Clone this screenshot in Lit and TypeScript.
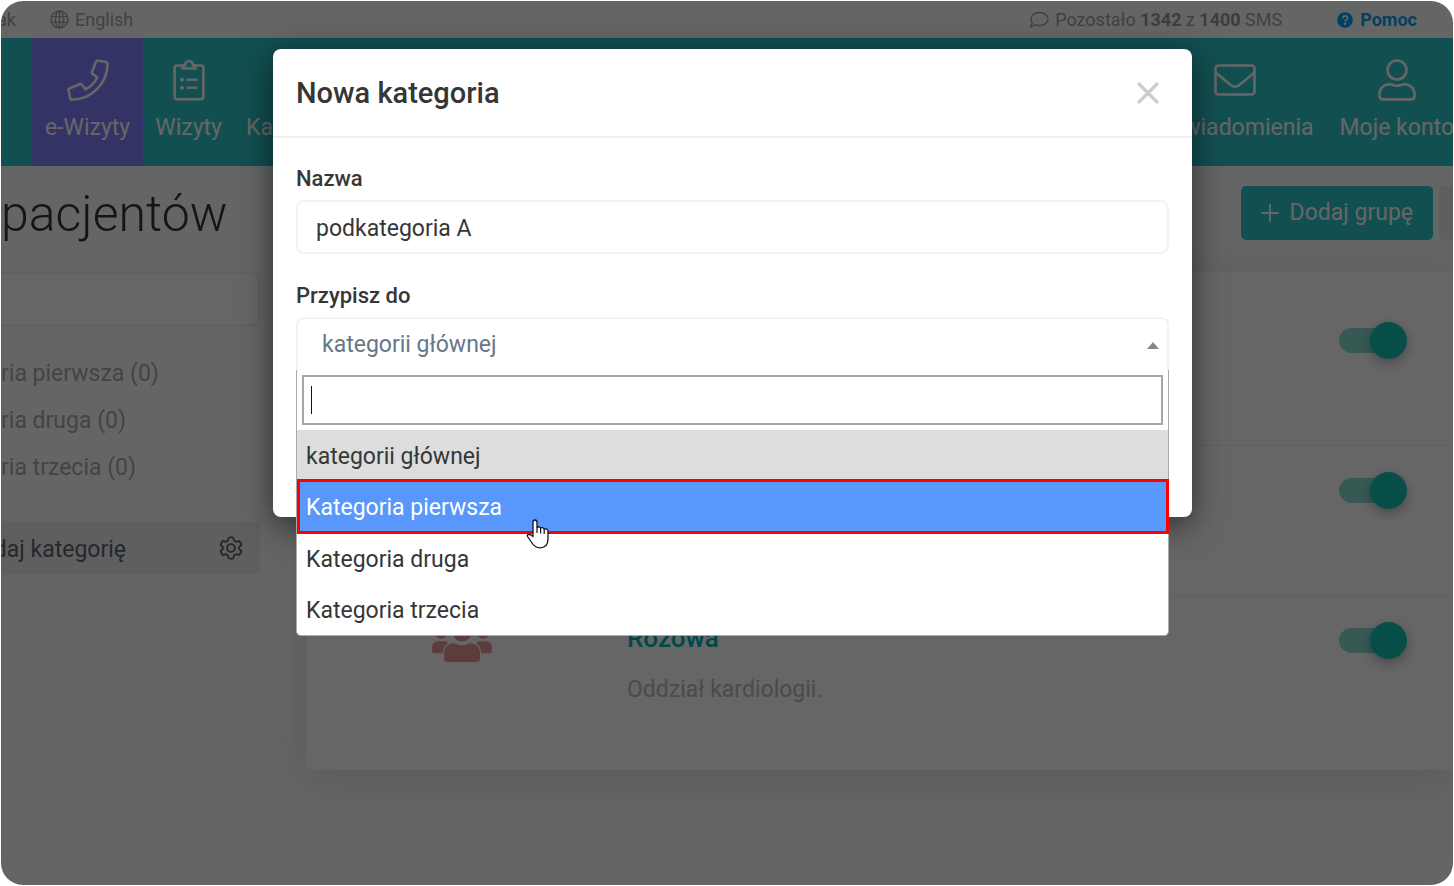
import { LitElement, html, svg, css } from "lit";
import { customElement, state } from "lit/decorators.js";
import { classMap } from "lit/directives/class-map.js";

interface Group {
  id: string;
  name: string;
  note: string;
}

const phoneIcon = svg`<svg class="nav-icon" viewBox="0 0 42 42" width="42" height="42" fill="none" stroke="currentColor" stroke-width="2.6" stroke-linejoin="round" aria-hidden="true"><path d="M30.5 1.5L39.5 3.2Q40.6 3.4 40.6 4.5C40.6 24.5 24.5 40.6 4.5 40.6Q3.4 40.6 3.2 39.5L1.5 31Q1.3 30 2.3 29.5L13 25Q14 24.6 14.7 25.5L18.5 30.3C23.5 27.8 27.8 23.5 30.3 18.5L25.5 14.7Q24.6 14 25 13L29.3 2.3Q29.7 1.4 30.5 1.5Z"/></svg>`;

const clipboardIcon = svg`<svg class="nav-icon" viewBox="0 0 32 42" width="32" height="42" fill="none" stroke="currentColor" stroke-width="2.6" stroke-linecap="round" stroke-linejoin="round" aria-hidden="true"><path d="M10 6.5H4.3Q1.6 6.5 1.6 9.2V37.5Q1.6 40.2 4.3 40.2H27.7Q30.4 40.2 30.4 37.5V9.2Q30.4 6.5 27.7 6.5H22"/><path d="M9.5 6.5H12.4A3.7 3.7 0 1 1 19.6 6.5H22.5V9.5H9.5Z"/><path d="M14.5 20.7H23.5M14.5 28.7H23.5"/><circle cx="9" cy="20.7" r="2" fill="currentColor" stroke="none"/><circle cx="9" cy="28.7" r="2" fill="currentColor" stroke="none"/></svg>`;

const envelopeIcon = svg`<svg class="nav-icon" viewBox="0 0 42 42" width="42" height="42" fill="none" stroke="currentColor" stroke-width="2.6" stroke-linejoin="round" aria-hidden="true"><rect x="1.5" y="6.5" width="39" height="29" rx="3"/><path d="M1.5 13.5L17 26.2Q21 29.2 25 26.2L40.5 13.5"/></svg>`;

const userIcon = svg`<svg class="nav-icon" viewBox="0 0 38 42" width="38" height="42" fill="none" stroke="currentColor" stroke-width="2.6" stroke-linejoin="round" aria-hidden="true"><circle cx="19" cy="11" r="9.5"/><path d="M11.5 25.2C15 25.2 15.5 26.8 19 26.8S23 25.2 26.5 25.2C32 25.2 36.5 29.5 36.5 35V37Q36.5 40.4 33 40.4H5Q1.5 40.4 1.5 37V35C1.5 29.5 6 25.2 11.5 25.2Z"/></svg>`;

const globeIcon = svg`<svg viewBox="0 0 20 20" width="19" height="19" fill="none" stroke="currentColor" stroke-width="1.5" aria-hidden="true"><circle cx="10" cy="10" r="9"/><ellipse cx="10" cy="10" rx="4.3" ry="9"/><path d="M10 1V19M1.8 7H18.2M1.8 13H18.2"/></svg>`;

const bubbleIcon = svg`<svg viewBox="0 0 20 18" width="20" height="18" fill="none" stroke="currentColor" stroke-width="1.4" stroke-linejoin="round" aria-hidden="true"><path d="M10.5 1.5C15.5 1.5 19 4.3 19 8S15.5 14.5 10.5 14.5C8.800 14.500 7.300 14.200 6 13.600C4.700 14.900 3 16 1 16C2.200 14.900 3 13.300 3.200 11.800C2.400 10.700 2 9.400 2 8C2 4.300 5.500 1.500 10.500 1.500Z"/></svg>`;

const helpIcon = svg`<svg viewBox="0 0 16 16" width="16" height="16" aria-hidden="true"><circle cx="8" cy="8" r="7.8" fill="currentColor"/><path d="M5.6 6.3C5.7 4.7 6.7 3.9 8.1 3.9C9.5 3.9 10.5 4.8 10.5 6C10.5 7.9 8.1 7.8 8.1 9.4" fill="none" stroke="#fafdfc" stroke-width="1.7"/><circle cx="8.1" cy="11.8" r="1.2" fill="#fafdfc"/></svg>`;

const gearIcon = svg`<svg viewBox="0 0 24 24" width="24" height="24" fill="none" stroke="currentColor" stroke-width="1.9" stroke-linejoin="round" aria-hidden="true"><path d="M10.4 1.4H13.6Q14.3 1.4 14.5 2.2L15 4.5L17.3 5.8L19.5 5.1Q20.3 4.9 20.7 5.5L22.2 8.2Q22.6 8.9 22 9.4L20.2 11V13L22 14.6Q22.6 15.1 22.2 15.8L20.7 18.5Q20.3 19.1 19.5 18.9L17.3 18.2L15 19.5L14.5 21.8Q14.3 22.6 13.6 22.6H10.4Q9.7 22.6 9.5 21.8L9 19.5L6.7 18.2L4.5 18.9Q3.7 19.1 3.3 18.5L1.8 15.8Q1.4 15.1 2 14.6L3.8 13V11L2 9.4Q1.4 8.9 1.8 8.2L3.3 5.5Q3.7 4.9 4.5 5.1L6.7 5.8L9 4.5L9.5 2.2Q9.7 1.4 10.4 1.4Z"/><circle cx="12" cy="12" r="3.9"/></svg>`;

const plusIcon = svg`<svg viewBox="0 0 18 18" width="18" height="18" fill="none" stroke="currentColor" stroke-width="2" stroke-linecap="round" aria-hidden="true"><path d="M9 1V17M1 9H17"/></svg>`;

const closeIcon = svg`<svg viewBox="0 0 24 24" width="24" height="24" fill="none" stroke="currentColor" stroke-width="3.2" stroke-linecap="round" aria-hidden="true"><path d="M3 3L21 21M21 3L3 21"/></svg>`;

const peopleIcon = svg`<svg viewBox="0 0 60 42" width="60" height="42" fill="currentColor" aria-hidden="true"><circle cx="9" cy="12.5" r="6.2"/><circle cx="51" cy="12.500" r="6.200"/><circle cx="30" cy="11" r="10.300"/><path d="M6 21.300H12Q14.500 21.300 16.300 23Q11.300 26 10.600 33.300H2Q0 33.300 0 31V27.500Q.3 21.600 6 21.300ZM54 21.300H48Q45.500 21.300 43.700 23Q48.700 26 49.400 33.300H58Q60 33.300 60 31V27.500Q59.700 21.600 54 21.300Z"/><path d="M22 23.300Q30 27 38 23.300C44.500 23.300 48 28 48 33V38.500Q48 42 44.500 42H15.500Q12 42 12 38.500V33C12 28 15.500 23.300 22 23.300Z"/></svg>`;

const handIcon = svg`<svg class="pointer" viewBox="0 0 24 30" width="24" height="30" aria-hidden="true"><path d="M7 17.500V3.200Q7 1 9 1Q11 1 11 3.200V8.500Q13.800 6.800 14.600 9Q17.200 7.700 18 10Q21.500 9.200 22 12V20Q22 28.800 13.800 28.800Q9 28.800 6 24L1.500 17.500Q.8 15.500 2.800 15.300Q4.500 15.300 7 17.500Z" fill="#fff" stroke="#11131f" stroke-width="1.300" stroke-linejoin="round"/><path d="M11 8.500V14M14.600 9V14.500M18.200 10V15" stroke="#11131f" stroke-width="1.200" fill="none"/></svg>`;

@customElement("app-root")
export class AppRoot extends LitElement {
  static styles = css`
    :host {
      display: block;
      background: #fff;
      font-family: Roboto, "Liberation Sans", sans-serif;
      font-size: 23px;
      line-height: 28px;
      color: #363636;
    }
    *, *::before, *::after { box-sizing: border-box; }
    button, input { font: inherit; color: inherit; margin: 0; }
    button { border: 0; background: none; padding: 0; cursor: pointer; }
    a { color: inherit; text-decoration: none; }
    ul { list-style: none; margin: 0; padding: 0; }
    h1, h2, p { margin: 0; }
    svg { display: block; flex: none; }

    .stage { padding: 1px; min-height: 100vh; display: grid; }
    .frame {
      position: relative;
      overflow: hidden;
      border-radius: 22px;
      background: #fafffd;
      min-width: 0;
    }

    .topbar {
      display: flex;
      align-items: center;
      height: 37px;
      padding-right: 36px;
      font-size: 18px;
      color: #a4a4a4;
    }
    .account { width: 15px; display: flex; justify-content: flex-end; }
    .language { display: flex; align-items: center; gap: 6px; margin-left: 34px; }
    .sms { display: flex; align-items: center; gap: 6px; margin-left: auto; }
    .sms b { font-weight: 700; color: #999; }
    .help { display: flex; align-items: center; gap: 7px; margin-left: 55px; color: #00a0f8; font-weight: 700; }

    .navbar { display: flex; height: 128px; padding-left: 31px; background: #2dc6cb; color: #fff; }
    .nav-item {
      display: flex;
      flex-direction: column;
      align-items: center;
      gap: 13px;
      padding: 21px 12px 0;
      white-space: nowrap;
    }
    .nav-item.active { padding: 21px 13px 0; background: #8280ff; }
    .nav-gap { height: 42px; }
    .nav-end { display: flex; gap: 2px; margin-left: auto; margin-right: -13px; }

    .titlebar { display: flex; align-items: center; height: 94px; }
    .titlebar h1 { padding-top: 2px; font-size: 50px; line-height: 60px; font-weight: 300; }
    .actions { display: flex; gap: 6px; margin-left: auto; margin-right: -20px; }
    .add-group {
      display: flex;
      align-items: center;
      gap: 11px;
      height: 54px;
      padding: 0 20px;
      border-radius: 5px;
      background: #2dc6cb;
      color: #fff;
    }
    .more { width: 34px; height: 54px; border-radius: 5px; background: #f0eeef; }

    .content { display: flex; align-items: flex-start; gap: 46px; padding-top: 12px; }
    .sidebar { flex: none; width: 259px; }
    .search {
      display: block;
      width: 100%;
      height: 54px;
      border: 2px solid #f2f3f5;
      border-left: 0;
      border-radius: 0 8px 8px 0;
      background: #fff;
    }
    .categories { padding: 24px 0 30px; color: #aaa; }
    .categories a { display: block; height: 47px; line-height: 47px; }
    .manage {
      display: flex;
      align-items: center;
      justify-content: space-between;
      height: 54px;
      padding-right: 17px;
      border-radius: 0 5px 5px 0;
      background: #f0eeef;
      color: #58646f;
    }
    .manage-label { display: flex; justify-content: flex-end; width: 125px; padding-top: 3px; white-space: nowrap; }

    .card {
      flex: 1;
      min-width: 0;
      padding: 24px 0;
      border-radius: 5px 0 0 5px;
      background: #fff;
      box-shadow: 0 8px 40px rgba(60, 60, 90, 0.16);
    }
    .group { display: grid; grid-template-columns: 321px 1fr auto; height: 150px; padding-right: 46px; }
    .group + .group { box-shadow: 0 -1px #efefef; }
    .group-icon { padding: 24px 0 0 126px; color: #e59a96; }
    .group-name { padding-top: 28px; font-size: 26px; font-weight: 500; color: #00b5b5; }
    .group-note { padding-top: 24px; color: #bbb; }

    .switch {
      appearance: none;
      position: relative;
      width: 68px;
      height: 37px;
      margin: 26px 0 0;
      background: none;
    }
    .switch::after {
      content: "";
      display: block;
      width: 60px;
      height: 25px;
      margin-top: 6px;
      border-radius: 13px;
      background: #89dfd3;
    }
    .switch::before {
      content: "";
      position: absolute;
      right: 0;
      top: 0;
      width: 37px;
      height: 37px;
      border-radius: 50%;
      background: #12c4b3;
      box-shadow: 0 4px 12px rgba(0, 0, 0, 0.3);
    }

    .backdrop {
      position: absolute;
      inset: 0;
      background: rgba(0, 0, 0, 0.6);
      padding: 48px 261px 0 272px;
    }
    .dialog {
      position: relative;
      border-radius: 8px;
      background: #fff;
      box-shadow: 0 8px 32px rgba(0, 0, 0, 0.55);
    }
    .dialog-head {
      display: flex;
      align-items: center;
      justify-content: space-between;
      height: 89px;
      padding: 1px 32px 0 23px;
      border-bottom: 2px solid #f0f0f2;
    }
    .dialog-head h2 { font-size: 29px; line-height: 34px; font-weight: 500; }
    .close { color: #ccc; }
    .dialog-body { padding: 27px 23px 146px; }
    .label { display: block; height: 35px; font-size: 22px; font-weight: 500; }
    .name {
      display: block;
      width: 100%;
      height: 54px;
      margin-bottom: 28px;
      padding: 2px 18px 0;
      border: 2px solid #f1f3f7;
      border-radius: 8px;
      outline: 0;
      background: #fff;
    }
    .picker { position: relative; }
    .current {
      display: flex;
      align-items: center;
      justify-content: space-between;
      width: 100%;
      height: 54px;
      padding: 0 8px 0 24px;
      border: 2px solid #f1f3f7;
      border-bottom: 0;
      border-radius: 8px 8px 0 0;
      color: #677788;
    }
    .arrow { border: 6px solid transparent; border-top: 0; border-bottom: 7px solid #888; }
    .menu {
      position: absolute;
      top: 53px;
      left: 0;
      right: 0;
      border: 1px solid #aaa;
      border-top: 0;
      border-radius: 0 0 5px 5px;
      background: #fff;
    }
    .filter-row { position: relative; padding: 5px; }
    .filter {
      display: block;
      width: 100%;
      height: 50px;
      padding: 0 6px;
      border: 2px solid #a7a7ab;
      outline: 0;
      background: #fff;
      caret-color: transparent;
    }
    .caret { position: absolute; left: 14px; top: 16px; width: 1px; height: 28px; background: #111; }
    .option { position: relative; height: 51px; padding: 13px 9px 0; }
    .option.selected { background: #ddd; }
    .option.hovered { height: 52px; background: #5897fb; color: #fff; z-index: 1; }
    .option.hovered::after {
      content: "";
      position: absolute;
      inset: -2px -1px -1px 0;
      border: 3px solid #f00;
    }
    .pointer { position: absolute; left: 229px; top: 38px; z-index: 2; }
  `;

  @state() private hovered = 1;

  private groups: Group[] = [
    { id: "g1", name: "", note: "" },
    { id: "g2", name: "", note: "" },
    { id: "g3", name: "Różowa", note: "Oddział kardiologii." },
  ];

  private options = ["kategorii głównej", "Kategoria pierwsza", "Kategoria druga", "Kategoria trzecia"];

  private renderGroup(g: Group) {
    return html`<div class="group">
      <div class="group-icon">${peopleIcon}</div>
      <div>
        <p class="group-name">${g.name}</p>
        <p class="group-note">${g.note}</p>
      </div>
      <input class="switch" type="checkbox" role="switch" id=${g.id} aria-label="Aktywna" checked />
    </div>`;
  }

  private renderOption(text: string, i: number) {
    const on = i === this.hovered;
    return html`<li
      class=${classMap({ option: true, selected: i === 0, hovered: on })}
      role="option"
      aria-selected=${i === 0 ? "true" : "false"}
      @mouseenter=${() => (this.hovered = i)}
    >${text}${on ? handIcon : null}</li>`;
  }

  private renderDialog() {
    return html`<div class="backdrop">
      <section class="dialog" role="dialog" aria-modal="true" aria-labelledby="dialog-title">
        <header class="dialog-head">
          <h2 id="dialog-title">Nowa kategoria</h2>
          <button class="close" aria-label="Zamknij">${closeIcon}</button>
        </header>
        <div class="dialog-body">
          <label class="label" for="name">Nazwa</label>
          <input class="name" id="name" type="text" value="podkategoria A" />
          <label class="label" for="parent">Przypisz do</label>
          <div class="picker">
            <button class="current" id="parent" aria-haspopup="listbox" aria-expanded="true">
              <span>kategorii głównej</span><span class="arrow"></span>
            </button>
            <div class="menu">
              <div class="filter-row">
                <input class="filter" type="text" aria-label="Szukaj" />
                <span class="caret"></span>
              </div>
              <ul role="listbox" aria-labelledby="parent">
                ${this.options.map((o, i) => this.renderOption(o, i))}
              </ul>
            </div>
          </div>
        </div>
      </section>
    </div>`;
  }

  render() {
    return html`<div class="stage"><div class="frame">
      <div class="topbar">
        <span class="account">ak</span>
        <a class="language" href="#">${globeIcon}<span>English</span></a>
        <span class="sms">${bubbleIcon}<span>Pozostało <b>1342</b> z <b>1400</b> SMS</span></span>
        <a class="help" href="#">${helpIcon}<span>Pomoc</span></a>
      </div>
      <nav class="navbar">
        <a class="nav-item active" href="#">${phoneIcon}<span>e-Wizyty</span></a>
        <a class="nav-item" href="#">${clipboardIcon}<span>Wizyty</span></a>
        <a class="nav-item" href="#"><span class="nav-gap"></span><span>Ka</span></a>
        <div class="nav-end">
          <a class="nav-item" href="#">${envelopeIcon}<span>Powiadomienia</span></a>
          <a class="nav-item" href="#">${userIcon}<span>Moje konto</span></a>
        </div>
      </nav>
      <div class="titlebar">
        <h1>pacjentów</h1>
        <div class="actions">
          <button class="add-group">${plusIcon}<span>Dodaj grupę</span></button>
          <button class="more" aria-label="Więcej"></button>
        </div>
      </div>
      <main class="content">
        <aside class="sidebar">
          <input class="search" type="search" aria-label="Szukaj kategorii" />
          <ul class="categories">
            <li><a href="#">ria pierwsza (0)</a></li>
            <li><a href="#">ria druga (0)</a></li>
            <li><a href="#">ria trzecia (0)</a></li>
          </ul>
          <div class="manage">
            <button class="manage-label">daj kategorię</button>
            <button aria-label="Ustawienia">${gearIcon}</button>
          </div>
        </aside>
        <section class="card">${this.groups.map((g) => this.renderGroup(g))}</section>
      </main>
      ${this.renderDialog()}
    </div></div>`;
  }
}
